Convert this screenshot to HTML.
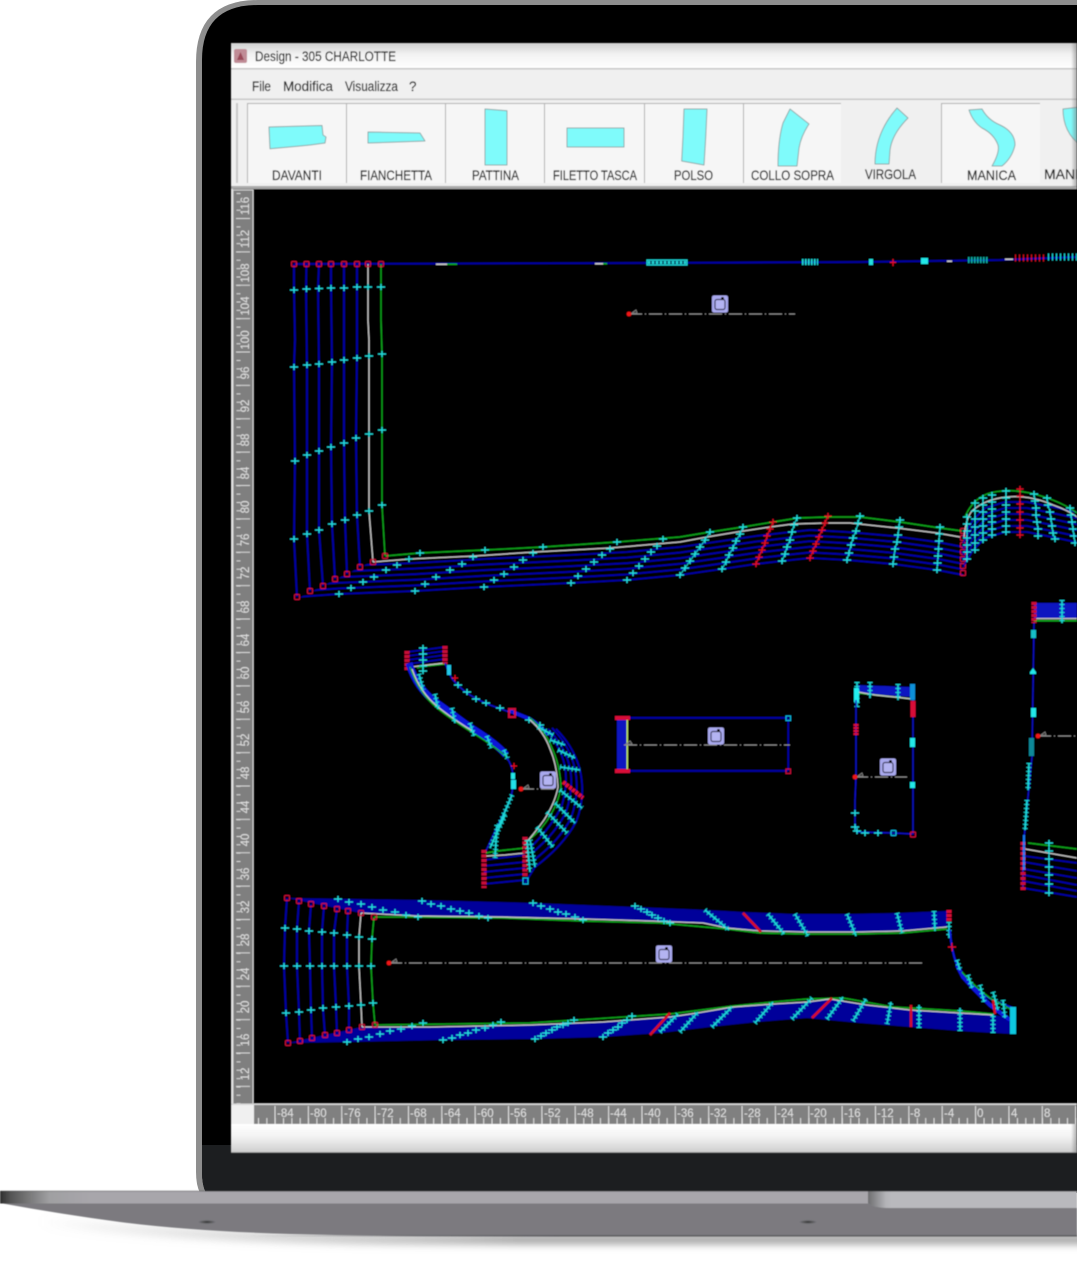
<!DOCTYPE html>
<html><head><meta charset="utf-8"><title>Design - 305 CHARLOTTE</title>
<style>
html,body{margin:0;padding:0;background:#fff;width:1077px;height:1263px;overflow:hidden}
svg{display:block}
text{font-family:"Liberation Sans",sans-serif}
.t{font-size:13.5px;fill:#222;stroke:#222;stroke-width:.2}
.lb{font-size:14px;fill:#222;stroke:#222;stroke-width:.25}
.rv,.rh{font-size:11.5px;fill:#e2e2e2}
.rv{text-anchor:middle}
.th{fill:#7ffbfb;stroke:#8fa8a8;stroke-width:1;stroke-linejoin:round}
.b{fill:none;stroke:#0000b0;stroke-width:1.6;stroke-linejoin:round}
.bt{fill:none;stroke:#0000a8;stroke-width:1.8;stroke-linejoin:round}
.w{fill:none;stroke:#c8c8c8;stroke-width:1.25;stroke-linejoin:round}
.g{fill:none;stroke:#0ea51e;stroke-width:1.4;stroke-linejoin:round}
.d{fill:none;stroke:#8c8c8c;stroke-width:1;stroke-dasharray:13 3 1 3}
.pc{fill:none;stroke:none;marker-start:url(#c);marker-mid:url(#c);marker-end:url(#c)}
.cc{fill:none;stroke:#1fd0d0;stroke-width:1;marker-start:url(#c);marker-mid:url(#c);marker-end:url(#c)}
.rc{fill:none;stroke:#d01020;stroke-width:1.2;marker-start:url(#r);marker-mid:url(#r);marker-end:url(#r)}
.sq{fill:none;stroke:none;marker-start:url(#s);marker-mid:url(#s);marker-end:url(#s)}
.l1{fill:none;stroke:#1fd8d8;stroke-width:1.6}
.l2{fill:none;stroke:#1fd8d8;stroke-width:5;stroke-dasharray:1 3}
.l3{fill:none;stroke:#d81020;stroke-width:2.5}
</style></head>
<body>
<svg xmlns="http://www.w3.org/2000/svg" width="1077" height="1263" viewBox="0 0 1077 1263">
<defs>
<filter id="soft" x="-2%" y="-2%" width="104%" height="104%"><feGaussianBlur stdDeviation="0.55"/></filter>
<filter id="sh" x="-10%" y="-200%" width="120%" height="500%"><feGaussianBlur stdDeviation="4.5"/></filter>
<marker id="c" markerUnits="userSpaceOnUse" markerWidth="8" markerHeight="8" refX="4" refY="4"><path d="M0 4H8M4 1V7" stroke="#20e0e0" stroke-width="1.3" fill="none"/></marker>
<marker id="r" markerUnits="userSpaceOnUse" markerWidth="8" markerHeight="8" refX="4" refY="4"><path d="M0.5 4H7.5M4 1V7" stroke="#e01020" stroke-width="1.3" fill="none"/></marker>
<marker id="s" markerUnits="userSpaceOnUse" markerWidth="8" markerHeight="8" refX="4" refY="4"><rect x="1.5" y="1.5" width="5" height="5" rx="1" fill="none" stroke="#c81038" stroke-width="1.2"/></marker>
<g id="ic"><rect x="-8" y="-8.5" width="16" height="17" rx="2" fill="#a9a9ee"/><rect x="-5" y="-4.5" width="10" height="10" rx="2" fill="#b4b4f2" stroke="#3a3a5a" stroke-width="1.2"/><circle cx="2.5" cy="-5.5" r="1.5" fill="#111"/></g>
<g id="mk"><path d="M3 -1L7 -4L8 -1Z" fill="none" stroke="#888" stroke-width=".8"/><circle r="2.4" fill="#f01818"/></g>
<polyline id="p1" points="250,599 297,597 339,594 415,591 484,587 571,583 627,580 680,575 722,569 756,564 782,561 810,558 847,560 893,564 937,570 963,575"/>
<polyline id="p1h" points="963,567 973,550 985,538 1005,532 1027,532 1057,538 1080,543"/>
<clipPath id="cp1"><polygon points="295,600 373,561 963,500 963,600"/></clipPath>
<clipPath id="cps"><rect x="231" y="43" width="846" height="1110"/></clipPath>
<linearGradient id="tb" x1="0" y1="0" x2="0" y2="1"><stop offset="0" stop-color="#cfcfcf"/><stop offset=".45" stop-color="#f2f2f2"/><stop offset="1" stop-color="#fff"/></linearGradient>
<linearGradient id="bt" x1="0" y1="0" x2="0" y2="1"><stop offset="0" stop-color="#fff"/><stop offset=".45" stop-color="#f3f3f3"/><stop offset="1" stop-color="#cfcfcf"/></linearGradient>
<linearGradient id="fd" x1="0" y1="0" x2="1" y2="0"><stop offset="0" stop-color="#777" stop-opacity="0"/><stop offset="1" stop-color="#777" stop-opacity=".6"/></linearGradient>
<linearGradient id="lipL" x1="0" y1="0" x2="1" y2="0"><stop offset="0" stop-color="#2e2e2e"/><stop offset=".12" stop-color="#555"/><stop offset=".55" stop-color="#a0a0a2"/><stop offset="1" stop-color="#a8a6ab"/></linearGradient>
<linearGradient id="lipN" x1="0" y1="0" x2="1" y2="0"><stop offset="0" stop-color="#6e6e70"/><stop offset=".75" stop-color="#b4b4b8"/><stop offset="1" stop-color="#b9b9bd"/></linearGradient>
<linearGradient id="shg" gradientUnits="userSpaceOnUse" x1="40" y1="0" x2="520" y2="0"><stop offset="0" stop-color="#999" stop-opacity="0"/><stop offset=".5" stop-color="#999" stop-opacity=".55"/><stop offset="1" stop-color="#808080"/></linearGradient>
<linearGradient id="edge" gradientUnits="userSpaceOnUse" x1="250" y1="0" x2="560" y2="0"><stop offset="0" stop-color="#5e5e62" stop-opacity="0"/><stop offset="1" stop-color="#5e5e62"/></linearGradient>
<radialGradient id="ov"><stop offset="0" stop-color="#333"/><stop offset="1" stop-color="#7b7a7f"/></radialGradient>
</defs>

<rect width="1077" height="1263" fill="#fff"/>

<!-- base shadow -->
<path d="M40 1216 Q190 1234 400 1236 H1100 V1243 H400 Q200 1243 40 1226Z" fill="url(#shg)" filter="url(#sh)"/>

<!-- lid -->
<path d="M200 1193 Q196 1185 196 1172 V62 Q196 0 258 0 H1077 V1193Z" fill="#8e8e8e"/>
<path d="M206 1193 Q202 1185 202 1172 V60 Q202 5 258 5 H1077 V1193Z" fill="#000"/>
<path d="M206 1193 Q202 1185 202 1172 V1145 H1077 V1193Z" fill="#1c1e20"/>

<g filter="url(#soft)">
<g clip-path="url(#cps)">
<!-- title bar -->
<rect x="231" y="43" width="846" height="25" fill="url(#tb)"/>
<rect x="231" y="68" width="846" height="1.5" fill="#c6c6c6"/>
<rect x="234" y="49" width="13" height="14" rx="2" fill="#c08c96"/>
<path d="M237 60L240.5 52L244 60Z" fill="#9a4a58"/>
<text class="t" x="255" y="61" textLength="141" lengthAdjust="spacingAndGlyphs">Design - 305 CHARLOTTE</text>
<!-- menu -->
<rect x="231" y="69.5" width="846" height="29.5" fill="#f0f0f0"/>
<rect x="231" y="98.5" width="846" height="1.5" fill="#c8c8c8"/>
<text class="t" x="252" y="91" textLength="19" lengthAdjust="spacingAndGlyphs">File</text>
<text class="t" x="283" y="91" textLength="50" lengthAdjust="spacingAndGlyphs">Modifica</text>
<text class="t" x="345" y="91" textLength="53" lengthAdjust="spacingAndGlyphs">Visualizza</text>
<text class="t" x="409" y="91">?</text>
<!-- toolbar -->
<rect x="231" y="100" width="846" height="87" fill="#f0f0f0"/>
<rect x="236" y="103" width="2" height="80" fill="#c8c8c8"/>
<g fill="#f6f6f6"><rect x="247" y="103" width="99" height="80"/><rect x="346" y="103" width="99" height="80"/><rect x="445" y="103" width="99" height="80"/><rect x="544" y="103" width="100" height="80"/><rect x="644" y="103" width="99" height="80"/><rect x="743" y="103" width="98" height="80"/><rect x="941" y="103" width="99" height="80"/></g>
<g fill="#b0b0b0"><rect x="247" y="103" width="1" height="80"/><rect x="346" y="103" width="1" height="80"/><rect x="445" y="103" width="1" height="80"/><rect x="544" y="103" width="1" height="80"/><rect x="644" y="103" width="1" height="80"/><rect x="743" y="103" width="1" height="80"/><rect x="941" y="103" width="1" height="80"/><rect x="247" y="103" width="594" height="1"/><rect x="941" y="103" width="99" height="1"/></g>
<rect x="231" y="186" width="846" height="3" fill="#a8a8a8"/>

<polygon class="th" points="269,127 322,125.5 323,135 326,137 325,143 310,145 300,146 270,148.7"/>
<polygon class="th" points="368,132 420,133 425,141 397,142 368,143"/>
<polygon class="th" points="485,109 507,110.7 507,165 485,165"/>
<polygon class="th" points="567,128 624,128 624,147 567,147"/>
<polygon class="th" points="684,109 707,109 705.7,137 704,165 681.7,161 683,137"/>
<path class="th" d="M790 109L809 124Q801 136 799 148L797 166H778Q778 140 783 123Z"/>
<path class="th" d="M897 108L908 118Q892 134 890 150L889 164H875Q875 133 897 108Z"/>
<path class="th" d="M969 110L982 109Q988 120 1000 125Q1015 132 1015 145Q1012 158 1002 166H992Q1000 152 998 145Q994 134 982 128Q973 122 969 110Z"/>
<path class="th" d="M1063 109L1080 107V145Q1063 132 1063 109Z"/>
<text class="lb" x="272" y="180" textLength="50" lengthAdjust="spacingAndGlyphs">DAVANTI</text>
<text class="lb" x="360" y="180" textLength="72" lengthAdjust="spacingAndGlyphs">FIANCHETTA</text>
<text class="lb" x="472" y="180" textLength="47" lengthAdjust="spacingAndGlyphs">PATTINA</text>
<text class="lb" x="553" y="180" textLength="84" lengthAdjust="spacingAndGlyphs">FILETTO TASCA</text>
<text class="lb" x="674" y="180" textLength="39" lengthAdjust="spacingAndGlyphs">POLSO</text>
<text class="lb" x="751" y="180" textLength="83" lengthAdjust="spacingAndGlyphs">COLLO SOPRA</text>
<text class="lb" x="865" y="179" textLength="51" lengthAdjust="spacingAndGlyphs">VIRGOLA</text>
<text class="lb" x="967" y="180" textLength="49" lengthAdjust="spacingAndGlyphs">MANICA</text>
<text class="lb" x="1044" y="179">MANICA</text>

<!-- work area -->
<rect x="231" y="189" width="846" height="915" fill="#000"/>
<rect x="231" y="189" width="2" height="915" fill="#e6e6e6"/>
<!-- vertical ruler -->
<rect x="233" y="190" width="20" height="914" fill="#7f7f7f" stroke="#d8d8d8" stroke-width="1"/>
<line x1="238.5" y1="193" x2="238.5" y2="1104" stroke="#d8d8d8" stroke-width="4" stroke-dasharray="1 7.35"/>
<line x1="243" y1="218" x2="243" y2="1104" stroke="#d8d8d8" stroke-width="14" stroke-dasharray="1 32.38"/>
<g>
<text class="rv" transform="translate(249,206) rotate(-90)">116</text>
<text class="rv" transform="translate(249,239) rotate(-90)">112</text>
<text class="rv" transform="translate(249,273) rotate(-90)">108</text>
<text class="rv" transform="translate(249,306) rotate(-90)">104</text>
<text class="rv" transform="translate(249,340) rotate(-90)">100</text>
<text class="rv" transform="translate(249,373) rotate(-90)">96</text>
<text class="rv" transform="translate(249,406) rotate(-90)">92</text>
<text class="rv" transform="translate(249,440) rotate(-90)">88</text>
<text class="rv" transform="translate(249,473) rotate(-90)">84</text>
<text class="rv" transform="translate(249,507) rotate(-90)">80</text>
<text class="rv" transform="translate(249,540) rotate(-90)">76</text>
<text class="rv" transform="translate(249,573) rotate(-90)">72</text>
<text class="rv" transform="translate(249,607) rotate(-90)">68</text>
<text class="rv" transform="translate(249,640) rotate(-90)">64</text>
<text class="rv" transform="translate(249,673) rotate(-90)">60</text>
<text class="rv" transform="translate(249,707) rotate(-90)">56</text>
<text class="rv" transform="translate(249,740) rotate(-90)">52</text>
<text class="rv" transform="translate(249,773) rotate(-90)">48</text>
<text class="rv" transform="translate(249,807) rotate(-90)">44</text>
<text class="rv" transform="translate(249,840) rotate(-90)">40</text>
<text class="rv" transform="translate(249,874) rotate(-90)">36</text>
<text class="rv" transform="translate(249,907) rotate(-90)">32</text>
<text class="rv" transform="translate(249,940) rotate(-90)">28</text>
<text class="rv" transform="translate(249,974) rotate(-90)">24</text>
<text class="rv" transform="translate(249,1007) rotate(-90)">20</text>
<text class="rv" transform="translate(249,1040) rotate(-90)">16</text>
<text class="rv" transform="translate(249,1074) rotate(-90)">12</text>
</g>
<!-- horizontal ruler -->
<rect x="231" y="1104" width="846" height="20" fill="#f0f0f0"/>
<rect x="254" y="1105" width="823" height="19" fill="#808080"/>
<rect x="231" y="1103.5" width="846" height="1.5" fill="#d8d8d8"/>
<line x1="258" y1="1121" x2="1077" y2="1121" stroke="#e2e2e2" stroke-width="6" stroke-dasharray="1 7.34"/>
<line x1="274.5" y1="1115" x2="1077" y2="1115" stroke="#e2e2e2" stroke-width="18" stroke-dasharray="1 32.36"/>
<text class="rh" x="277" y="1117">-84</text><text class="rh" x="310" y="1117">-80</text><text class="rh" x="344" y="1117">-76</text><text class="rh" x="377" y="1117">-72</text><text class="rh" x="410" y="1117">-68</text><text class="rh" x="444" y="1117">-64</text><text class="rh" x="477" y="1117">-60</text><text class="rh" x="510" y="1117">-56</text><text class="rh" x="544" y="1117">-52</text><text class="rh" x="577" y="1117">-48</text><text class="rh" x="610" y="1117">-44</text><text class="rh" x="644" y="1117">-40</text><text class="rh" x="677" y="1117">-36</text><text class="rh" x="710" y="1117">-32</text><text class="rh" x="744" y="1117">-28</text><text class="rh" x="777" y="1117">-24</text><text class="rh" x="810" y="1117">-20</text><text class="rh" x="844" y="1117">-16</text><text class="rh" x="877" y="1117">-12</text><text class="rh" x="910" y="1117">-8</text><text class="rh" x="944" y="1117">-4</text><text class="rh" x="977" y="1117">0</text><text class="rh" x="1011" y="1117">4</text><text class="rh" x="1044" y="1117">8</text>
<rect x="231" y="1124" width="846" height="28" fill="url(#bt)"/>
<rect x="231" y="1152" width="846" height="1" fill="#9a9a9a"/>
<rect x="1071" y="43" width="6" height="144" fill="url(#fd)"/>
<rect x="1071" y="1124" width="6" height="29" fill="url(#fd)"/>

<!-- PIECE 1 -->
<polyline class="bt" points="294,264 640,263 860,262 1000,260 1077,257"/>
<g fill="#c8c8c8"><rect x="436" y="263.5" width="11" height="1.5"/><rect x="595" y="263" width="8" height="1.5"/><rect x="947" y="260.5" width="5" height="1.5"/><rect x="1005" y="258.5" width="8" height="1.5"/></g>
<rect x="447" y="263.5" width="10" height="1.5" fill="#0ea51e"/><rect x="603" y="263" width="4" height="1.5" fill="#0ea51e"/>
<rect x="647" y="260" width="40" height="5" fill="#0a5a70" stroke="#20d8d8" stroke-width="1"/>
<line x1="648" y1="262.5" x2="687" y2="262.5" stroke="#20d8d8" stroke-width="3" stroke-dasharray="2 2"/>
<line x1="802" y1="262" x2="818" y2="262" stroke="#20d8d8" stroke-width="6" stroke-dasharray="1.5 1.5"/>
<rect x="869" y="259" width="4" height="6" fill="#20e0e0"/><rect x="921" y="258" width="7" height="6" fill="#20e8e8"/>
<line x1="968" y1="260" x2="988" y2="260" stroke="#10a8a0" stroke-width="6" stroke-dasharray="1.5 1.5"/>
<line x1="1015" y1="258" x2="1046" y2="258" stroke="#d01020" stroke-width="7" stroke-dasharray="1 3"/>
<line x1="1048" y1="257" x2="1077" y2="257" stroke="#20d8d8" stroke-width="7" stroke-dasharray="1 3"/>
<path d="M893 259V266M890 262.5H896" stroke="#e01020" stroke-width="1.2"/>

<polyline class="bt" points="294,264 294,289 295,340 294,366 295,461 294,539 297,597"/>
<polyline class="bt" points="306.5,264 306,288 307,365 307,455 307,534 310,591"/>
<polyline class="bt" points="319,264 318,288 319,364 319,451 319,530 323,586"/>
<polyline class="bt" points="331,264 331,287 332,362 331,447 332,524 335,579"/>
<polyline class="bt" points="344,264 344,288 344,360 344,443 345,520 347,574"/>
<polyline class="bt" points="357,264 357,287 357,358 356,438 357,515 360,567"/>
<polyline class="w" points="368,264 368,287 368,320 369,340 369,356 369,434 369,511 373,562"/>
<polyline class="g" points="381,264 381,287 381,320 382,354 382,430 382,505 385,556"/>
<g clip-path="url(#cp1)" class="b">
<use href="#p1"/><use href="#p1" y="-5.6"/><use href="#p1" y="-11.2"/><use href="#p1" y="-16.8"/><use href="#p1" y="-22.4"/><use href="#p1" y="-28"/>
</g>
<polyline class="w" points="373,562 410,559 475,556 535,552 610,548 680,542 707,537 737,532 770,527 793,524 827,523 850,523 897,528 937,533 960,537"/>
<polyline class="g" points="385,556 420,553 485,550 543,547 617,542 680,537 710,532 743,527 773,522 798,518 828,517 860,517 900,522 940,528 962,531"/>
<polyline class="sq" points="294,264 306.5,264 319,264 331,264 344,264 357,264 368,264 381,264"/>
<polyline class="sq" points="297,597 310,591 323,586 335,579 347,574 360,567 373,562 385,556"/>
<polyline class="pc" points="294,290 306.5,289 319,288.5 331,288 344,288 357,287 368,287 381,287"/>
<polyline class="pc" points="294,367 307,365 319,364 332,362 344,360 357,358 369,356 382,354"/>
<polyline class="pc" points="295,461 307,455 319,451 331,447 344,443 356,438 369,434 382,430"/>
<polyline class="pc" points="294,539 307,534 319,530 332,524 345,520 357,515 369,511 382,505"/>
<polyline class="pc" points="339,594 351,588 363,582 374,577 386,570 397,565 409,559"/>
<polyline class="pc" points="420,553 415,591 425,584 436,577 450,570 462,564 473,557 485,550"/>
<polyline class="pc" points="484,587 494,580 504,574 514,567 523,560 533,553 543,547"/>
<polyline class="pc" points="571,583 578,576 586,569 594,562 602,555 610,549 617,542"/>
<polyline class="pc" points="627,580 633,573 639,566 645,559 651,552 657,546 663,539"/>
<polyline class="cc" points="680,575 685,568 690,561 695,554 700,547 705,540 710,532"/>
<polyline class="cc" points="722,569 726,562 729,555 733,548 736,541 740,534 743,527"/>
<polyline class="rc" points="756,564 759,557 762,550 765,543 767,536 770,529 773,522"/>
<polyline class="cc" points="782,561 785,554 787,547 790,540 792,532 794,525 797,518"/>
<polyline class="rc" points="810,558 813,551 816,544 819,537 822,530 825,523 828,516"/>
<polyline class="cc" points="847,560 849,553 851,545 853,538 856,531 858,523 860,516"/>
<polyline class="cc" points="893,564 894,557 895,549 897,542 898,535 899,527 900,520"/>
<polyline class="cc" points="937,570 937.5,563 938,556 938.5,549 939,541 939.5,534 940,527"/>
<polyline class="sq" points="963,531 963,538 963,545 963,552 963,559 963,566 963,573"/>
<!-- hump -->
<g class="b">
<use href="#p1h"/><use href="#p1h" y="-6"/><use href="#p1h" y="-12"/><use href="#p1h" y="-18"/><use href="#p1h" y="-24"/><use href="#p1h" y="-30"/>
</g>
<path class="g" d="M965 517Q972 500 987 494Q1005 488 1030 493Q1060 500 1080 515"/>
<path class="w" d="M964 537Q966 518 972 511Q985 499 1007 497Q1030 495 1053 505Q1068 510 1080 519"/>
<polyline class="cc" points="967,517 967,524 967,531 967,538 967,545 967,552 967,559"/>
<polyline class="cc" points="975,503 975,511 975,519 975,527 975,535 975,543 975,550"/>
<polyline class="cc" points="983,498 983,505 983,512 983,519 983,526 983,533 983,540"/>
<polyline class="cc" points="992,495 992,502 992,509 992,516 992,522 992,529 992,535"/>
<polyline class="cc" points="1006,491 1006,498 1006,505 1006,512 1006,519 1006,526 1006,532"/>
<polyline class="rc" points="1020,489 1020,496 1020,504 1020,512 1020,520 1020,528 1020,535"/>
<polyline class="cc" points="1034,494 1035,501 1036,508 1036,515 1037,522 1038,529 1038,536"/>
<polyline class="cc" points="1047,498 1048,505 1050,512 1051,519 1052,526 1053,533 1055,539"/>
<polyline class="cc" points="1070,508 1071,515 1072,522 1073,529 1074,536 1075,543"/>
<line x1="629" y1="314" x2="795" y2="314" class="d"/><use href="#mk" x="629" y="314"/><use href="#ic" x="720" y="304"/>

<!-- PIECE 2 -->
<polyline class="b" points="407,652 423,650 445,647"/><polyline class="b" points="407,656 423,654 445,651"/><polyline class="b" points="407,660 423,658 445,655"/><polyline class="b" points="407,664 423,662 445,659"/>
<polyline class="g" points="417,668 427,666 445,664"/>
<polyline class="w" points="411,667 427,665 445,663"/>
<polyline class="cc" points="423,648 423,654 423,660 423,666 423,671"/>
<line x1="407" y1="651" x2="407" y2="671" stroke="#c81038" stroke-width="5" stroke-dasharray="3 1"/>
<line x1="445" y1="646" x2="445" y2="664" stroke="#c81038" stroke-width="5" stroke-dasharray="3 1"/>
<path fill="none" stroke="#0a18d8" stroke-width="7" d="M409 663C414 680 424 694 437 703S465 724 473 729S498 745 506 755"/>
<path class="g" d="M410 667C416 685 425 698 437 708S465 728 473 733S500 750 507 758"/>
<path class="w" d="M412 669C418 686 426 697 438 707S466 727 474 732"/>
<path class="l1" d="M419 674L423 690M435 694L438 709M452 708L455 723M470 723L474 736M487 736L491 748M504 750L508 760"/>
<path class="l2" d="M419 674L423 690M435 694L438 709M452 708L455 723M470 723L474 736M487 736L491 748M504 750L508 760"/>
<path fill="none" stroke="#0a10c0" stroke-width="1.5" d="M507 758Q514 768 513 782Q513 795 507 807L497 827L485 853"/>
<rect x="511" y="780" width="5" height="9" fill="#20e0e8"/><rect x="511" y="773" width="4" height="6" fill="#20e8e8"/>
<path class="l1" d="M512 795L498 828M505 815L490 848"/><path class="l2" d="M512 795L498 828M505 815L490 848"/>
<path d="M511 766H517M514 763V769" stroke="#e01020" stroke-width="1"/>
<path fill="none" stroke="#0a10c0" stroke-width="1.5" d="M445 663Q450 676 453 680Q462 690 470 695Q480 701 490 705L512 713L530 720"/>
<path fill="none" stroke="#0a18d8" stroke-width="3.5" d="M508 710L530 719Q540 725 548 735"/>
<polyline class="pc" points="458,685 467,692 476,699 486,703 500,708 529,720 540,725"/>
<rect x="447" y="665" width="4" height="10" fill="#20c8e8"/>
<path d="M452 678H458M455 675V681" stroke="#e01020" stroke-width="1"/>
<rect x="509" y="709" width="6" height="8" fill="none" stroke="#c81038" stroke-width="2"/>
<path class="b" d="M545 730Q561 746 565 767Q568 785 562 805Q553 825 531 847"/>
<path class="b" d="M548 729Q565 746 570 768Q574 788 566 812Q556 833 532 853"/>
<path class="b" d="M552 728Q570 746 575 769Q580 793 571 818Q560 840 534 860"/>
<path class="b" d="M556 729Q574 747 580 770Q586 797 576 822Q563 846 535 867L525 883"/>
<path class="g" d="M530 718Q545 730 552 748Q560 765 561 787Q558 805 546 822Q536 836 525 842"/>
<path class="w" d="M530 720Q544 732 550 749Q557 765 558 787Q555 803 544 820Q534 834 524 845"/>
<path class="l1" d="M538 727L553 735M550 740L565 745M558 750L575 758M560 767L580 770M560 790L582 808M555 803L575 823M547 812L567 833M537 827L553 847M530 840L535 867"/>
<path class="l2" d="M538 727L553 735M550 740L565 745M558 750L575 758M560 767L580 770M560 790L582 808M555 803L575 823M547 812L567 833M537 827L553 847M530 840L535 867"/>
<path fill="none" stroke="#e01030" stroke-width="4" stroke-dasharray="3 1" d="M563 782L583 798"/>
<polyline class="b" points="484,860 525,855"/><polyline class="b" points="484,866 525,862"/><polyline class="b" points="484,872 525,868"/><polyline class="b" points="484,878 525,874"/><polyline class="b" points="484,884 525,880"/>
<polyline class="g" points="486,853 497,851 525,848"/>
<polyline class="w" points="486,856 505,855 525,853"/>
<line x1="484" y1="850" x2="484" y2="888" stroke="#c81038" stroke-width="5" stroke-dasharray="3 1.5"/>
<line x1="525" y1="837" x2="525" y2="878" stroke="#c81038" stroke-width="5" stroke-dasharray="3 1.5"/>
<rect x="523" y="878" width="5" height="6" fill="none" stroke="#10b8e0" stroke-width="1.2"/>
<path class="l1" d="M497 825L495 858M527 840L530 872"/>
<path class="l2" d="M497 825L495 858M527 840L530 872"/>
<line x1="521" y1="789" x2="557" y2="789" class="d"/><use href="#mk" x="521" y="789"/><use href="#ic" x="548" y="780"/>

<!-- PIECE 3 -->
<rect x="617" y="718" width="10" height="53" fill="#0a12c0"/>
<rect x="626.5" y="718" width="1.5" height="53" fill="#b8e060"/>
<rect x="622" y="717" width="166" height="1.8" fill="#0000a8"/>
<rect x="622" y="770" width="166" height="1.8" fill="#0000a8"/>
<rect x="787.5" y="718" width="1.5" height="53" fill="#0000a8"/>
<rect x="615" y="716" width="15" height="4" fill="#d81038"/><rect x="615" y="769" width="15" height="4" fill="#d81038"/>
<rect x="786" y="716" width="4.5" height="4.5" fill="none" stroke="#10b8e0" stroke-width="1.2"/>
<rect x="786" y="769" width="4.5" height="4.5" fill="none" stroke="#c81038" stroke-width="1.2"/>
<line x1="624" y1="745" x2="790" y2="745" class="d"/><path d="M626 744L630 741L632 744Z" fill="none" stroke="#888" stroke-width=".8"/>
<use href="#ic" x="716" y="736"/>

<!-- PIECE 4 -->
<polygon points="857,685 913,687 913,697 885,695 857,693" fill="#0a12c0"/>
<polyline class="g" points="858,693 885,696 913,699"/>
<polyline class="w" points="858,692 875,695 895,697 912,699"/>
<path class="l1" d="M857 682V707M870 682V698M898 684V700"/>
<path class="l2" d="M857 682V707M870 682V698M898 684V700"/>
<rect x="854" y="688" width="5" height="14" fill="#20f0f0"/>
<rect x="910" y="684" width="5" height="16" fill="#0890d8"/>
<polyline fill="none" stroke="#0a10c0" stroke-width="1.5" points="856,700 856,777 855,800 855,823 857,832 893,833 913,834 913,700"/>
<line x1="856" y1="724" x2="856" y2="736" stroke="#d81038" stroke-width="5" stroke-dasharray="2 1"/>
<line x1="913" y1="701" x2="913" y2="717" stroke="#d81038" stroke-width="5"/>
<rect x="910" y="738" width="5" height="9" fill="#20e8e8"/><rect x="910" y="782" width="5" height="6" fill="#20e8e8"/>
<polyline class="pc" points="855,813 855,827 857,831 865,833 878,833"/>
<rect x="891" y="830.5" width="5" height="5" rx="1" fill="none" stroke="#10b8e0" stroke-width="1.2"/>
<rect x="910.5" y="832" width="5" height="5" rx="1" fill="none" stroke="#c81038" stroke-width="1.2"/>
<line x1="855" y1="777" x2="907" y2="777" class="d"/><use href="#mk" x="855" y="777"/><use href="#ic" x="888" y="767"/>

<!-- PIECE 5 -->
<rect x="1034" y="603" width="43" height="15" fill="#0a12c0"/>
<rect x="1034" y="618" width="43" height="1.3" fill="#c4c4c4"/><rect x="1034" y="620" width="43" height="1.5" fill="#0ea51e"/>
<line x1="1034" y1="602" x2="1034" y2="623" stroke="#c81038" stroke-width="5" stroke-dasharray="3 1"/>
<path class="l1" d="M1062 600V623"/><path class="l2" d="M1062 600V623"/>
<polyline fill="none" stroke="#0a10c0" stroke-width="1.5" points="1034,623 1033,690 1032,757 1027,807 1023,850 1023,890"/>
<rect x="1031" y="630" width="5" height="8" fill="#18c0c8"/><path d="M1030 672L1033 668L1036 672V674H1030Z" fill="#20e8e8"/><rect x="1031" y="708" width="5" height="9" fill="#20e8e8"/>
<rect x="1029" y="738" width="5" height="18" fill="#108898"/>
<path class="l1" d="M1029 763L1028 790M1027 800L1025 830"/><path class="l2" d="M1029 763L1028 790M1027 800L1025 830"/>
<polyline class="g" points="1028,843 1077,849"/><polyline class="w" points="1025,849 1077,858"/>
<polyline class="b" points="1024,856 1077,863"/><polyline class="b" points="1024,862 1077,871"/><polyline class="b" points="1024,869 1077,878"/><polyline class="b" points="1024,875 1077,885"/><polyline class="b" points="1023,881 1077,891"/><polyline class="b" points="1023,888 1077,897"/>
<line x1="1023" y1="842" x2="1023" y2="891" stroke="#c81038" stroke-width="5" stroke-dasharray="3 2"/>
<line x1="1024" y1="835" x2="1024" y2="870" stroke="#1878f0" stroke-width="2"/>
<polyline class="cc" points="1049,843 1049,851 1049,859 1049,867 1049,875 1049,884 1049,893"/>
<line x1="1038" y1="736" x2="1077" y2="736" class="d"/><use href="#mk" x="1038" y="736"/>

<!-- PIECE 6 -->
<polygon fill="#00009a" points="287,898 420,900 533,903 660,908 707,910 743,912 793,914 847,914 898,913 947,911 947,927 902,931 857,932 807,932 760,931 727,928 703,923 660,921 583,919 503,917 417,916 361,913"/>
<polygon fill="#00009a" points="288,1043 347,1042 443,1040 533,1039 603,1037 660,1033 710,1027 757,1022 807,1018 860,1023 910,1027 960,1031 1013,1034 1013,1018 993,1015 960,1013 910,1010 867,1005 830,999 807,1002 773,1004 733,1007 697,1013 660,1017 603,1022 530,1025 430,1027 362,1027"/>
<polyline class="bt" points="287,898 285,928 284,966 286,1013 288,1043"/>
<polyline class="bt" points="299,901 297,929 297,966 299,1012 300,1041"/>
<polyline class="bt" points="311,904 309,931 310,966 311,1010 312,1038"/>
<polyline class="bt" points="324,906 322,932 322,966 323,1008 325,1035"/>
<polyline class="bt" points="337,909 334,933 334,966 336,1007 337,1033"/>
<polyline class="bt" points="348,911 347,935 347,966 349,1006 349,1030"/>
<polyline class="w" points="361,913 359,937 359,966 361,1005 362,1027"/>
<polyline class="g" points="374,917 372,939 371,966 373,1003 375,1025"/>
<polyline class="g" points="374,917 417,917 503,918 583,921 660,923 727,929 760,933 807,934 857,934 902,933 947,929"/>
<polyline class="w" points="361,913 417,916 503,917 583,919 650,921 703,923 727,928 760,931 807,932 857,932 902,931 947,927"/>
<polyline class="g" points="375,1025 530,1023 670,1014 733,1006 773,1002 807,999 843,998 893,1007 960,1011 993,1014"/>
<polyline class="w" points="362,1027 430,1027 530,1025 603,1022 670,1017 697,1013 733,1007 773,1004 807,1002 830,999 867,1005 910,1010 960,1013 993,1015"/>
<polyline class="sq" points="287,898 299,901 311,904 324,906 337,909 348,911 361,913 374,917"/>
<polyline class="sq" points="288,1043 300,1041 312,1038 325,1035 337,1033 349,1030 362,1027 375,1025"/>
<polyline class="pc" points="285,928 297,929 309,931 322,932 334,933 347,935 359,937 372,939"/>
<polyline class="pc" points="284,966 297,966 310,966 322,966 334,966 347,966 359,966 371,966"/>
<polyline class="pc" points="286,1013 299,1012 311,1010 323,1008 336,1007 349,1006 361,1005 373,1003"/>
<polyline class="pc" points="338,899 349,902 361,904 372,907 383,910 395,912 406,915 418,917"/>
<polyline class="pc" points="422,901 431,904 441,906 451,909 460,911 469,913 479,916 488,918"/>
<polyline class="pc" points="533,903 541,906 550,909 558,912 566,914 575,917 583,920"/>
<polyline class="pc" points="635,906 641,909 647,912 652,915 658,918 664,921 670,923"/>
<polyline class="pc" points="347,1042 358,1039 369,1037 380,1034 390,1031 401,1029 412,1026 423,1023"/>
<polyline class="pc" points="443,1040 452,1038 460,1035 468,1033 476,1030 485,1028 493,1025 501,1022"/>
<polyline class="pc" points="535,1039 541,1036 546,1033 552,1030 557,1027 563,1025 568,1023 574,1020"/>
<polyline class="pc" points="603,1037 608,1033 613,1030 618,1027 622,1023 627,1020 632,1016"/>
<path class="l1" d="M705 910L729 930M768 914L784 934M795 914L808 936M847 914L856 936M897 913L902 933M934 911L935 931M660 1032L678 1014M680 1032L698 1012M712 1027L732 1007M755 1023L773 1002M792 1019L812 998M827 1019L843 997M853 1021L866 999M887 1024L891 1002M919 1028L919 1005M960 1031L960 1008M993 1033L993 1014"/>
<path class="l2" d="M705 910L729 930M768 914L784 934M795 914L808 936M847 914L856 936M897 913L902 933M934 911L935 931M660 1032L678 1014M680 1032L698 1012M712 1027L732 1007M755 1023L773 1002M792 1019L812 998M827 1019L843 997M853 1021L866 999M887 1024L891 1002M919 1028L919 1005M960 1031L960 1008M993 1033L993 1014"/>
<path class="l3" d="M743 913L761 932M650 1035L670 1013M812 1018L832 998M911 1027V1005"/>
<line x1="949" y1="910" x2="949" y2="922" stroke="#d81038" stroke-width="5" stroke-dasharray="3 1"/>
<path class="l1" d="M949 922V938"/><path class="l2" d="M949 922V938"/>
<path fill="none" stroke="#0a18d8" stroke-width="2" d="M950 930Q951 950 957 965Q965 980 980 992Q990 1000 1013 1008"/>
<path fill="none" stroke="#0a18d8" stroke-width="4" d="M957 965L963 977L975 990L990 1005L1010 1020"/>
<path class="g" d="M962 972Q975 987 990 998L1012 1010"/>
<path class="l1" d="M957 960L960 970M968 975L972 988M980 985L984 1002M993 992L998 1010M1003 1000L1005 1018"/>
<path class="l2" d="M957 960L960 970M968 975L972 988M980 985L984 1002M993 992L998 1010M1003 1000L1005 1018"/>
<path d="M948 947H956M952 943V951" stroke="#e01020" stroke-width="1.2"/>
<path class="l3" d="M993 1000L995 1014"/>
<rect x="1010" y="1007" width="6" height="27" fill="#10c8e0"/>
<line x1="389" y1="963" x2="923" y2="963" class="d"/><use href="#mk" x="389" y="963"/><use href="#ic" x="664" y="954"/>
</g>
</g>

<!-- base -->
<g filter="url(#soft)">
<path d="M0 1203 Q60 1214 120 1222 Q190 1231 290 1234 Q350 1235.5 420 1236 H1077 V1203Z" fill="#7b7a7f"/>
<rect x="250" y="1235" width="827" height="1.6" fill="url(#edge)"/>
<rect x="0" y="1191" width="868" height="12.5" fill="#a8a6ab"/>
<rect x="0" y="1191" width="90" height="12.5" fill="url(#lipL)"/>
<path d="M868 1191 H1077 V1208 H895 Q872 1208 868 1203Z" fill="#b9b9bd"/>
<path d="M868 1191 H892 V1208 H890 Q872 1208 868 1203Z" fill="url(#lipN)"/>
<rect x="0" y="1190.6" width="1077" height="1" fill="#3a3a3c" opacity=".45"/>
<ellipse cx="207" cy="1222" rx="9" ry="2" fill="url(#ov)"/>
<ellipse cx="808" cy="1222" rx="9" ry="2" fill="url(#ov)"/>
</g>
</svg>
</body></html>
